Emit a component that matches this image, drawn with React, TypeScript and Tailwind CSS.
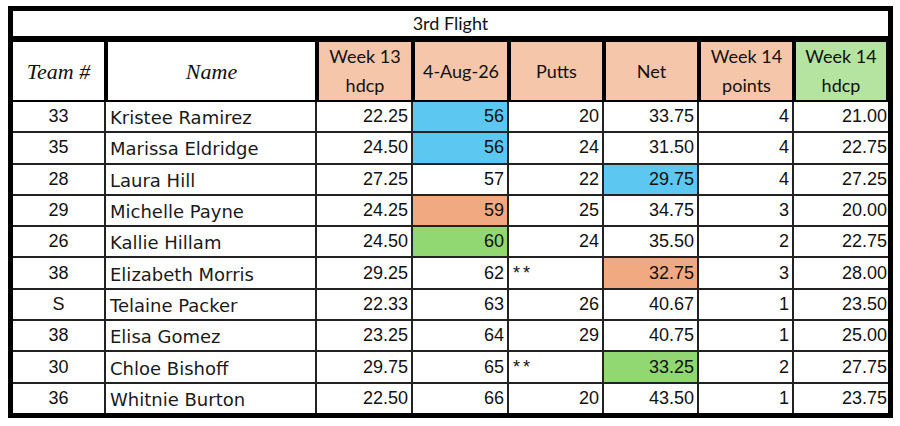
type Fill = 'blue' | 'orange' | 'green' | undefined;

interface Row {
  team: string;
  name: string;
  w13: string;
  score: string;
  scoreFill?: Fill;
  putts: string;
  net: string;
  netFill?: Fill;
  points: string;
  hdcp: string;
}

const rows: Row[] = [
  { team: '33', name: 'Kristee Ramirez', w13: '22.25', score: '56', scoreFill: 'blue', putts: '20', net: '33.75', points: '4', hdcp: '21.00' },
  { team: '35', name: 'Marissa Eldridge', w13: '24.50', score: '56', scoreFill: 'blue', putts: '24', net: '31.50', points: '4', hdcp: '22.75' },
  { team: '28', name: 'Laura Hill', w13: '27.25', score: '57', putts: '22', net: '29.75', netFill: 'blue', points: '4', hdcp: '27.25' },
  { team: '29', name: 'Michelle Payne', w13: '24.25', score: '59', scoreFill: 'orange', putts: '25', net: '34.75', points: '3', hdcp: '20.00' },
  { team: '26', name: 'Kallie Hillam', w13: '24.50', score: '60', scoreFill: 'green', putts: '24', net: '35.50', points: '2', hdcp: '22.75' },
  { team: '38', name: 'Elizabeth Morris', w13: '29.25', score: '62', putts: '**', net: '32.75', netFill: 'orange', points: '3', hdcp: '28.00' },
  { team: 'S', name: 'Telaine Packer', w13: '22.33', score: '63', putts: '26', net: '40.67', points: '1', hdcp: '23.50' },
  { team: '38', name: 'Elisa Gomez', w13: '23.25', score: '64', putts: '29', net: '40.75', points: '1', hdcp: '25.00' },
  { team: '30', name: 'Chloe Bishoff', w13: '29.75', score: '65', putts: '**', net: '33.25', netFill: 'green', points: '2', hdcp: '27.75' },
  { team: '36', name: 'Whitnie Burton', w13: '22.50', score: '66', putts: '20', net: '43.50', points: '1', hdcp: '23.75' },
];

const fillClass = (fill: Fill) => {
  if (fill === 'blue') return 'bg-[#5cc8f2]';
  if (fill === 'orange') return 'bg-[#f1a982]';
  if (fill === 'green') return 'bg-[#92d872]';
  return 'bg-white';
};

const cols = 'grid grid-cols-[93px_211px_96px_96px_95px_95px_95px_94px]';
const arial = { fontFamily: '"Liberation Sans", Arial, sans-serif' };
const calibri = { fontFamily: 'Lato, "Open Sans", sans-serif' };
const script = { fontFamily: '"Liberation Serif", "DejaVu Serif", serif' };

function HeadCell({ lines, green }: { lines: string[]; green?: boolean }) {
  return (
    <div
      className={`flex flex-col items-center justify-center border-x-2 border-black leading-[29px] text-[18px] text-[#111] ${
        green ? 'bg-[#b5e3a0]' : 'bg-[#f5c6a9]'
      }`}
      style={calibri}
    >
      {lines.map((l) => (
        <span key={l}>{l}</span>
      ))}
    </div>
  );
}

export default function App() {
  return (
    <div className="w-[900px] h-[426px] bg-white pt-[6px] pl-[8px]">
      <div className="w-[885px] h-[412px] border-[5px] border-black flex flex-col bg-white">
        {/* title */}
        <div
          className="h-[31px] shrink-0 border-b-[6px] border-black flex items-center justify-center text-[18px] text-[#111]"
          style={calibri}
        >
          3rd Flight
        </div>

        {/* header */}
        <div className={`${cols} h-[60px] shrink-0 border-b-4 border-black bg-black`}>
          <div
            className="flex items-center justify-center bg-white border-r-2 border-black italic text-[22px] text-[#111]"
            style={script}
          >
            Team #
          </div>
          <div
            className="flex items-center justify-center bg-white border-x-2 border-black italic text-[22px] text-[#111]"
            style={script}
          >
            Name
          </div>
          <HeadCell lines={['Week 13', 'hdcp']} />
          <HeadCell lines={['4-Aug-26']} />
          <HeadCell lines={['Putts']} />
          <HeadCell lines={['Net']} />
          <HeadCell lines={['Week 14', 'points']} />
          <HeadCell lines={['Week 14', 'hdcp']} green />
        </div>

        {/* rows */}
        <div className="flex-1 flex flex-col">
          {rows.map((r, i) => (
            <div
              key={r.name}
              className={`${cols} flex-1 text-[18px] text-[#111] ${i > 0 ? 'border-t-2 border-[#222]' : ''}`}
              style={arial}
            >
              <div className="flex items-center justify-center border-r-2 border-[#222]">{r.team}</div>
              <div
                className="flex items-center pl-[4px] pt-[2px] border-r-2 border-[#222] text-[18px] text-[#1a1a1a]"
                style={{ fontFamily: '"DejaVu Sans", sans-serif' }}
              >
                {r.name}
              </div>
              <div className="flex items-center justify-end pr-[3px] border-r-2 border-[#222]">{r.w13}</div>
              <div className={`flex items-center justify-end pr-[3px] border-r-2 border-[#222] ${fillClass(r.scoreFill)}`}>
                {r.score}
              </div>
              {r.putts === '**' ? (
                <div className="flex items-start pt-[2px] pl-[4px] border-r-2 border-[#222] tracking-[3px]">**</div>
              ) : (
                <div className="flex items-center justify-end pr-[3px] border-r-2 border-[#222]">{r.putts}</div>
              )}
              <div className={`flex items-center justify-end pr-[3px] border-r-2 border-[#222] ${fillClass(r.netFill)}`}>
                {r.net}
              </div>
              <div className="flex items-center justify-end pr-[3px] border-r-2 border-[#222]">{r.points}</div>
              <div className="flex items-center justify-end pr-[1px]">{r.hdcp}</div>
            </div>
          ))}
        </div>
      </div>
    </div>
  );
}
